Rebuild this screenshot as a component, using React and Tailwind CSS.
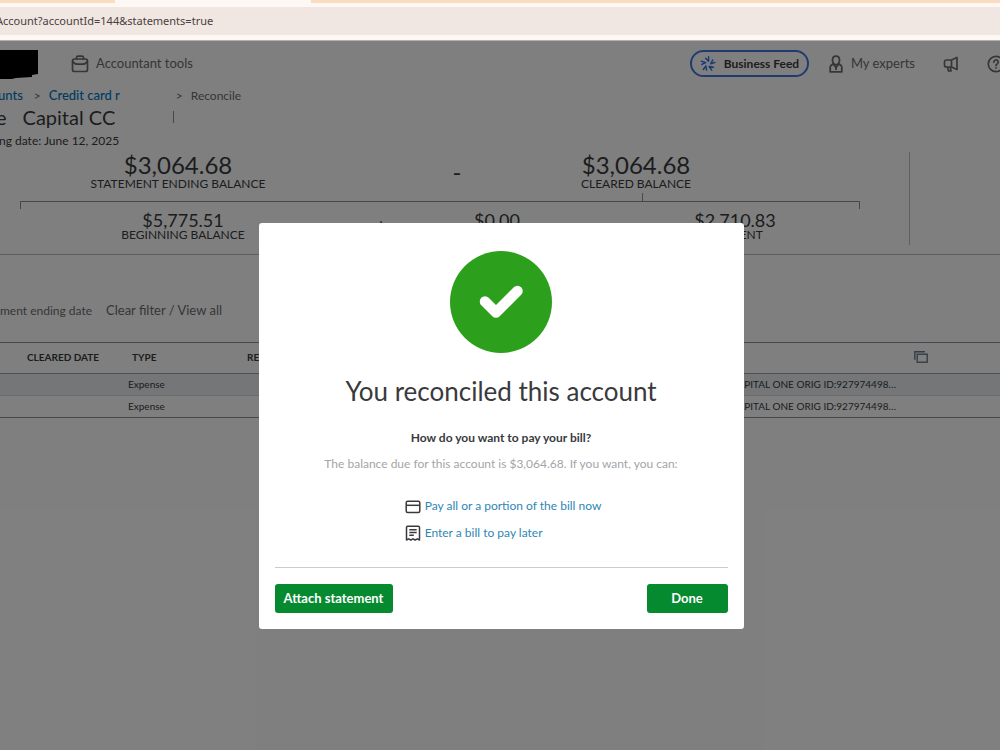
import React from 'react'

const BriefcaseIcon = () => (
    <svg className="w-[18px] h-[18px] shrink-0" viewBox="0 0 18 18" fill="none" stroke="currentColor" strokeWidth="1.7" strokeLinecap="round" strokeLinejoin="round">
        <rect x="1.5" y="4" width="15" height="12.5" rx="2" />
        <path d="M5.5 4V2.8a1.6 1.6 0 0 1 1.6-1.6h3.8a1.6 1.6 0 0 1 1.6 1.6V4" />
        <path d="M1.8 6.500c1 1.800 2.800 2.700 4.700 2.700h5c1.900 0 3.700-.9 4.700-2.700" />
    </svg>
)

const FeedIcon = () => (
    <svg className="w-4 h-4 shrink-0" viewBox="0 0 16 16" fill="none" stroke="currentColor" strokeWidth="1.4" strokeLinecap="round" strokeLinejoin="round">
        {[0, 72, 144, 216, 288].map((angle) => (
            <path key={angle} d="M8.600 .8V5.300L5.600 2.200" transform={`rotate(${angle} 8 8)`} />
        ))}
    </svg>
)

const ExpertIcon = () => (
    <svg className="w-[14px] h-[18px] shrink-0" viewBox="0 0 14 18" fill="none" stroke="currentColor" strokeWidth="1.800" strokeLinejoin="round">
        <path d="M7 1.200c2.300 0 3.500 1.600 3.500 3.900S9.200 9.800 7 9.800 3.500 7.400 3.500 5.100 4.700 1.200 7 1.200z" />
        <path d="M4.200 8.800L2.200 10.300c-.7.5-1 1.200-1 2V16.800h11.600v-4.500c0-.8-.3-1.500-1-2L9.800 8.800M4.500 9.500L7 12.500l2.500-3M7 12.500v2.500" />
    </svg>
)

const MegaphoneIcon = () => (
    <svg className="w-4 h-4 shrink-0" viewBox="0 0 16 16" fill="none" stroke="currentColor" strokeWidth="1.700" strokeLinejoin="round" strokeLinecap="round">
        <path d="M8.500 4L14 1.500v12L8.500 11H3.200A1.700 1.700 0 0 1 1.500 9.300V5.700A1.700 1.700 0 0 1 3.200 4zM8.500 4v7M4.500 11l1 4H8l-.7-4" />
    </svg>
)

const HelpIcon = () => (
    <svg className="w-[18px] h-[18px] shrink-0" viewBox="0 0 18 18" fill="none" stroke="currentColor" strokeWidth="1.700" strokeLinecap="round">
        <circle cx="9" cy="9" r="7.700" />
        <path d="M6.800 7.200a2.200 2.200 0 1 1 3.300 1.900c-.7.4-1.100.8-1.100 1.500M9 12.800v.2" />
    </svg>
)

const CopyIcon = () => (
    <svg className="w-[14px] h-3 shrink-0" viewBox="0 0 14 12" fill="none" stroke="currentColor" strokeWidth="1.400">
        <rect x="3.200" y="3.200" width="10" height="8" />
        <path d="M11 .8H.8v8" />
    </svg>
)

const CardIcon = () => (
    <svg className="w-4 h-4 shrink-0" viewBox="0 0 16 16" fill="none" stroke="#393a3d" strokeWidth="1.500">
        <rect x="1.200" y="3.200" width="13.600" height="11.300" rx="1.500" />
        <path d="M1.200 7.300h13.600" />
    </svg>
)

const BillIcon = () => (
    <svg className="w-4 h-4 shrink-0" viewBox="0 0 16 16" fill="none" stroke="#393a3d" strokeWidth="1.500" strokeLinejoin="round">
        <path d="M1.500 15V2.500a1.300 1.300 0 0 1 1.300-1.300h10.400a1.300 1.300 0 0 1 1.300 1.300V15l-2.200-1.200-2.200 1.200L8 13.800 5.800 15l-2.200-1.200z" />
        <path d="M4.300 4.700h7.400M4.300 7.500h7.400M4.300 10.300h4.500" />
    </svg>
)

const Amount = ({ value, label, large }) => (
    <div className="flex flex-col items-center whitespace-nowrap text-[#393a3d]">
        <div className={large ? 'text-[24px] leading-6' : 'text-[18px] leading-4'}>{value}</div>
        <div className="text-[12px] leading-[14px]">{label}</div>
    </div>
)

const rows = [
    { id: 1, type: 'Expense', memo: 'CAPITAL ONE ORIG ID:927974498…', rowClass: 'bg-[#e8ecf0] border-b border-gray-300' },
    { id: 2, type: 'Expense', memo: 'CAPITAL ONE ORIG ID:927974498…', rowClass: 'border-b border-[#8d9096]' },
]

const BrowserBar = () => (
    <div className="bg-[#fef8f4] border-b border-[#b5b0ad]">
        <div className="flex h-[3px] bg-[#fcdcc0]">
            <div className="ml-[115px] w-[196px] bg-[#fef8f4]" />
        </div>
        <div className="mt-1 mb-[5px] flex h-7 items-center overflow-hidden bg-[#f0e6e2]">
            <span className="-ml-1 font-['Noto_Sans',sans-serif] text-[11px] text-[#4a403c]">Account?accountId=144&amp;statements=true</span>
        </div>
    </div>
)

const TopNav = () => (
    <header className="flex h-[45px] items-center justify-between text-[13px] text-[#6b6c72]">
        <div className="flex items-center">
            <svg className="h-[30px] w-[38px]" viewBox="0 0 38 30">
                <path d="M0 1h38v24l-6 1v2l-16 1-4 1H0z" fill="#000" />
            </svg>
            <button className="ml-[33px] flex items-center gap-[7px]">
                <BriefcaseIcon />
                Accountant tools
            </button>
        </div>
        <div className="-mr-[5px] flex items-center">
            <button className="flex h-[27px] w-[119px] items-center justify-center gap-2 rounded-full border-2 border-[#3f76e0] text-[12px] font-bold text-[#393a3d]">
                <span className="text-[#2f70f5]"><FeedIcon /></span>
                Business Feed
            </button>
            <button className="ml-5 flex items-center gap-2">
                <ExpertIcon />
                My experts
            </button>
            <button className="ml-7" aria-label="Announcements"><MegaphoneIcon /></button>
            <button className="ml-7" aria-label="Help"><HelpIcon /></button>
        </div>
    </header>
)

const PageHeading = () => (
    <div className="whitespace-nowrap">
        <nav className="flex h-5 items-center text-[12px] text-[#6b6c72]">
            <a href="#accounts" className="-ml-[2px] text-[13px] font-medium text-[#0077c5]">unts</a>
            <span className="ml-[11px]">&gt;</span>
            <a href="#card" className="ml-2 w-[119px] text-[13px] font-medium text-[#0077c5]">Credit card r</a>
            <span className="ml-2">&gt;</span>
            <span className="ml-2">Reconcile</span>
        </nav>
        <h1 className="flex h-[22px] items-center text-[20px] text-[#393a3d]">
            <span className="-ml-1">e</span>
            <span className="ml-4">Capital CC</span>
            <span className="ml-[58px] h-3 w-px bg-[#8d9096]" />
        </h1>
        <p className="-ml-px h-6 text-[12px] leading-[26px] text-[#393a3d]">ng date: June 12, 2025</p>
    </div>
)

const Summary = () => (
    <section className="flex border-b border-[#babec5] pb-[9px]">
        <div className="ml-5 w-[84%]">
            <div className="grid grid-cols-[316fr_242fr_116fr_166fr] items-center pt-px">
                <Amount value="$3,064.68" label="STATEMENT ENDING BALANCE" large />
                <div className="text-center text-[24px] leading-6 text-[#393a3d]">-</div>
                <Amount value="$3,064.68" label="CLEARED BALANCE" large />
            </div>
            <div className="mt-[2px] ml-[74%] h-2 w-px bg-[#8d9096]" />
            <div className="h-2 border-x border-t border-[#8d9096]" />
            <div className="grid grid-cols-[326fr_70fr_162fr_32fr_250fr] items-start pt-[3px]">
                <Amount value="$5,775.51" label="BEGINNING BALANCE" />
                <div className="pt-1 text-center text-[19px] leading-5 text-[#393a3d]">+</div>
                <Amount value="$0.00" />
                <div />
                <Amount value="$2,710.83" label="PAYMENT" />
            </div>
        </div>
        <div className="ml-[49px] h-[93px] w-px bg-[#babec5]" />
    </section>
)

const Transactions = () => (
    <table className="w-full table-fixed border-t border-[#8d9096] text-left text-[10px] text-[#393a3d]">
        <thead>
            <tr className="h-[31px] border-b border-gray-400">
                <th className="w-[12%] pb-[2px] pl-[27px] font-bold whitespace-nowrap">CLEARED DATE</th>
                <th className="w-[12%] pb-[2px] pl-3 font-bold">TYPE</th>
                <th className="w-[50%] pb-[2px] pl-[7px] font-bold">REF NO.</th>
                <th className="w-[16%]" aria-label="Memo" />
                <th className="pb-[2px] pl-[14px] text-[#6b7c8c]"><CopyIcon /></th>
            </tr>
        </thead>
        <tbody>
            {rows.map((row) => (
                <tr key={row.id} className={`h-[22px] ${row.rowClass}`}>
                    <td />
                    <td className="pl-2">{row.type}</td>
                    <td />
                    <td className="pr-1 whitespace-nowrap"><div className="flex justify-end">{row.memo}</div></td>
                    <td />
                </tr>
            ))}
        </tbody>
    </table>
)

const SuccessDialog = () => (
    <div role="dialog" aria-labelledby="dialog-title" className="flex w-[485px] flex-col items-center rounded-[3px] bg-white px-4 pt-7 pb-4">
        <svg className="h-[102px] w-[102px]" viewBox="0 0 102 102" fill="none">
            <circle cx="51" cy="51" r="51" fill="#2ca01c" />
            <path d="M35 50.500L46 61.500L67.500 40" stroke="#fff" strokeWidth="10.500" strokeLinecap="round" strokeLinejoin="round" />
        </svg>
        <h2 id="dialog-title" className="mt-5 text-[26px] leading-9 text-[#393a3d]">You reconciled this account</h2>
        <p className="mt-[19px] text-[12px] leading-5 font-bold text-[#393a3d]">How do you want to pay your bill?</p>
        <p className="mt-[6px] text-[12px] leading-5 text-[#a3a5aa]">The balance due for this account is $3,064.68. If you want, you can:</p>
        <div className="mt-[22px] flex flex-col gap-[7px] pl-1 text-[12px] leading-5 text-[#2f86b5]">
            <a href="#pay" className="flex items-center gap-1"><CardIcon />Pay all or a portion of the bill now</a>
            <a href="#bill" className="flex items-center gap-1"><BillIcon />Enter a bill to pay later</a>
        </div>
        <div className="mt-6 flex w-full justify-between border-t border-[#c9cbd0] pt-4 text-[13px] font-bold text-white">
            <button className="h-[29px] w-[118px] rounded-[3px] bg-[#058a30]">Attach statement</button>
            <button className="h-[29px] w-[81px] rounded-[3px] bg-[#058a30]">Done</button>
        </div>
    </div>
)

const App = () => {
    return (
        <div className="flex min-h-screen flex-col overflow-hidden bg-white font-[Lato,sans-serif]">
            <BrowserBar />
            <main className="relative flex-1 overflow-hidden">
                <TopNav />
                <PageHeading />
                <Summary />
                <div className="flex h-[87px] items-center gap-[14px] pt-6 text-[12px] text-[#6b6c72]">
                    <span>ment ending date</span>
                    <button className="text-[13px]">Clear filter / View all</button>
                </div>
                <Transactions />
                {/* modal backdrop */}
                <div className="absolute inset-0 flex items-start justify-center bg-black/50 pt-[182px] pl-[2px]">
                    <SuccessDialog />
                </div>
            </main>
        </div>
    )
}

export default App
